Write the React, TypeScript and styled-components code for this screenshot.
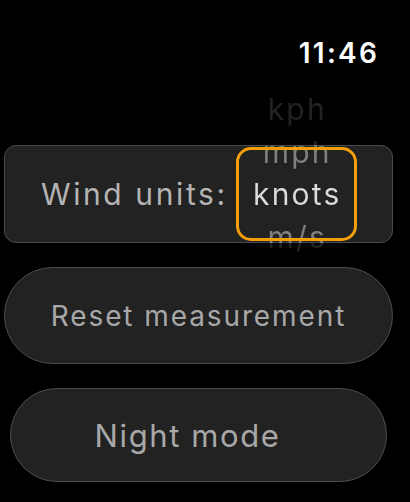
import React from 'react';
import styled, { createGlobalStyle } from 'styled-components';

const GlobalStyle = createGlobalStyle`
    html, body {
        margin: 0;
        padding: 0;
        background: #000;
    }
    body {
        font-family: Inter, "Noto Sans", "Liberation Sans", sans-serif;
        -webkit-font-smoothing: antialiased;
    }
`;

const Screen = styled.div`
    width: 410px;
    height: 502px;
    background: #000;
    overflow: hidden;
    display: flex;
    flex-direction: column;
`;

const StatusBar = styled.div`
    height: 80px;
    display: flex;
    justify-content: flex-end;
    align-items: flex-start;
    padding: 36px 31px 0 0;
    box-sizing: border-box;
`;

const Clock = styled.span`
    color: #fff;
    font-size: 28px;
    font-weight: 600;
    letter-spacing: 2.2px;
`;

const List = styled.div`
    display: flex;
    flex-direction: column;
    gap: 24px;
    padding-top: 65px;
`;

const Card = styled.div`
    position: relative;
    margin: 0 17px 0 4px;
    height: 98px;
    box-sizing: border-box;
    background: #222;
    border: 1.5px solid #4a4a4a;
    border-radius: 12px;
    display: flex;
    align-items: center;
    padding: 0 0 0 36px;
`;

const Label = styled.span`
    color: #b4b4b4;
    font-size: 30px;
    letter-spacing: 2.6px;
    margin-right: 8px;
    white-space: nowrap;
`;

const Frame = styled.div`
    position: relative;
    width: 121px;
    height: 94px;
    flex-shrink: 0;
    box-sizing: border-box;

    &::after {
        content: '';
        position: absolute;
        inset: 0;
        border: 3px solid #f59e0b;
        border-radius: 15px;
        z-index: 2;
    }
`;

// wheel text is dim over black, brighter over the card, brightest in the frame
const Wheel = styled.div`
    position: absolute;
    left: 0;
    right: 0;
    top: -59px;
    z-index: 1;
    display: flex;
    flex-direction: column;
    align-items: center;
    font-size: 30px;
    letter-spacing: 2.2px;
    text-indent: 2.2px;
    color: transparent;
    background: linear-gradient(
        to bottom,
        #232323 0px,
        #232323 57px,
        #808080 57px,
        #808080 85px,
        #dcdcdc 85px,
        #dcdcdc 128px,
        #808080 128px,
        #808080 155px,
        #232323 155px
    );
    -webkit-background-clip: text;
    background-clip: text;
`;

const WheelItem = styled.span`
    height: 42.5px;
    line-height: 42.5px;
`;

const PillButton = styled.button<{ $inset: number; $height: number; $shift?: number }>`
    margin: 0 ${p => 17 + p.$inset}px 0 ${p => 4 + p.$inset}px;
    height: ${p => p.$height}px;
    box-sizing: border-box;
    background: #222;
    border: 1.5px solid #4d4d4d;
    border-radius: 999px;
    color: #a8a8a8;
    font-family: inherit;
    font-size: ${p => (p.$inset ? 31 : 28)}px;
    letter-spacing: ${p => (p.$inset ? 1.6 : 1.9)}px;
    padding: 0 ${p => p.$shift ?? 0}px 0 0;
    display: flex;
    align-items: center;
    justify-content: center;
`;

const units = ['kph', 'mph', 'knots', 'm/s'];

export default function App() {
    return <>
        <GlobalStyle />
        <Screen>
            <StatusBar>
                <Clock>11:46</Clock>
            </StatusBar>
            <List>
                <Card>
                    <Label>Wind units:</Label>
                    <Frame>
                        <Wheel>
                            {units.map(u => <WheelItem key={u}>{u}</WheelItem>)}
                        </Wheel>
                    </Frame>
                </Card>
                <PillButton $inset={0} $height={97}>Reset measurement</PillButton>
                <PillButton $inset={6} $height={94} $shift={22}>Night mode</PillButton>
            </List>
        </Screen>
    </>;
}
